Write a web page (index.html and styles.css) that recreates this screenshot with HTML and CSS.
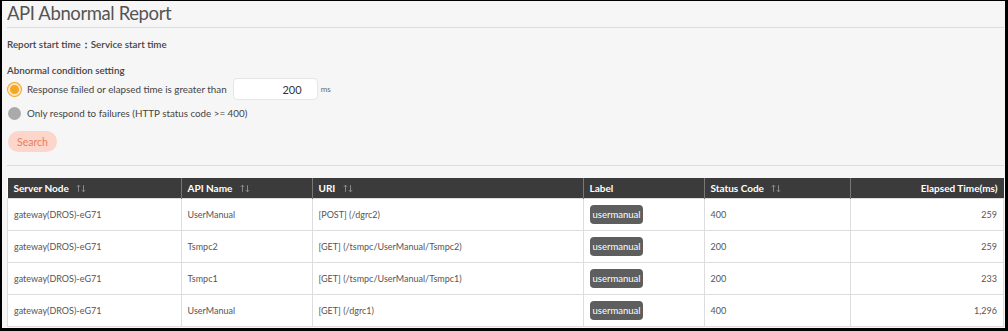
FILE: index.html
```html
<!DOCTYPE html>
<html lang="en">
<head>
  <meta charset="UTF-8" />
  <title>API Abnormal Report</title>
  <link rel="stylesheet" href="styles.css">
</head>
<body>
  <div class="page">
    <h1 class="title">API Abnormal Report</h1>
    <p class="start-time">Report start time：Service start time</p>

    <p class="section-label">Abnormal condition setting</p>
    <div class="option">
      <span class="radio checked"></span>
      <span>Response failed or elapsed time is greater than</span>
      <input class="ms-input" type="text" value="200" />
      <span class="unit">ms</span>
    </div>
    <div class="option">
      <span class="radio"></span>
      <span>Only respond to failures (HTTP status code &gt;= 400)</span>
    </div>
    <button class="search-button">Search</button>
    <div class="divider"></div>

    <table class="report">
      <thead>
        <tr>
          <th class="col-node">Server Node <svg class="sort" viewBox="0 0 12 10"><path d="M3 9V1M1 3l2-2 2 2M9 1v8M7 7l2 2 2-2"/></svg></th>
          <th class="col-api">API Name <svg class="sort" viewBox="0 0 12 10"><path d="M3 9V1M1 3l2-2 2 2M9 1v8M7 7l2 2 2-2"/></svg></th>
          <th class="col-uri">URI <svg class="sort" viewBox="0 0 12 10"><path d="M3 9V1M1 3l2-2 2 2M9 1v8M7 7l2 2 2-2"/></svg></th>
          <th class="col-label">Label</th>
          <th class="col-status">Status Code <svg class="sort" viewBox="0 0 12 10"><path d="M3 9V1M1 3l2-2 2 2M9 1v8M7 7l2 2 2-2"/></svg></th>
          <th class="col-time">Elapsed Time(ms)</th>
        </tr>
      </thead>
      <tbody>
        <tr>
          <td>gateway(DROS)-eG71</td>
          <td>UserManual</td>
          <td>[POST] (/dgrc2)</td>
          <td><span class="badge">usermanual</span></td>
          <td>400</td>
          <td class="num">259</td>
        </tr>
        <tr>
          <td>gateway(DROS)-eG71</td>
          <td>Tsmpc2</td>
          <td>[GET] (/tsmpc/UserManual/Tsmpc2)</td>
          <td><span class="badge">usermanual</span></td>
          <td>200</td>
          <td class="num">259</td>
        </tr>
        <tr>
          <td>gateway(DROS)-eG71</td>
          <td>Tsmpc1</td>
          <td>[GET] (/tsmpc/UserManual/Tsmpc1)</td>
          <td><span class="badge">usermanual</span></td>
          <td>200</td>
          <td class="num">233</td>
        </tr>
        <tr>
          <td>gateway(DROS)-eG71</td>
          <td>UserManual</td>
          <td>[GET] (/dgrc1)</td>
          <td><span class="badge">usermanual</span></td>
          <td>400</td>
          <td class="num">1,296</td>
        </tr>
      </tbody>
    </table>
  </div>
</body>
</html>
```

FILE: styles.css
```css
html, body {
  margin: 0;
  height: 100%;
  overflow: hidden;
}
body {
  font-family: 'Lato', 'Noto Sans', sans-serif;
  font-size: 9.8px;
  color: #444;
  background: #000;
}
.page {
  box-sizing: border-box;
  height: 331px;
  width: 1008px;
  border-style: solid;
  border-color: #000;
  border-width: 1px 3px 3px 2px;
  background: #f6f6f6;
  padding: 0 1px 0 5px;
  overflow: hidden;
}
.title {
  font-size: 18.5px;
  font-weight: 400;
  letter-spacing: -0.4px;
  color: #555;
  margin: 0;
  padding: 2px 0 4px;
  line-height: 20px;
  border-bottom: 1px solid #ddd;
}
.start-time {
  margin: 9px 0 0;
  font-weight: 600;
  line-height: 14px;
}
.section-label {
  margin: 12px 0 0;
  font-weight: 600;
  line-height: 14px;
}
.option {
  display: flex;
  align-items: center;
  gap: 6px;
  height: 24px;
  margin-left: 1px;
}
.radio {
  box-sizing: border-box;
  width: 13px;
  height: 13px;
  border-radius: 50%;
  background: #aaa;
}
.radio.checked {
  background: #f5a623;
  border: 2px solid #fde5bd;
  box-shadow: 0 0 0 1px #f5a623;
}
.ms-input {
  box-sizing: border-box;
  width: 85px;
  height: 22px;
  border: 1px solid #e6e6e6;
  border-radius: 4px;
  background: #fff;
  text-align: right;
  padding: 0 15px 0 4px;
  font-family: inherit;
  font-size: 11px;
  color: #333;
}
.unit {
  font-size: 8px;
  color: #666;
  margin-left: -3px;
}
.search-button {
  display: block;
  margin: 6px 0 0 1px;
  height: 21px;
  padding: 0 9px;
  border: none;
  border-radius: 11px;
  background: #fcd6ca;
  color: #e97e62;
  font-family: inherit;
  font-size: 10.5px;
}
.divider {
  border-top: 1px solid #ddd;
  margin: 13px 0 12px;
}
.report {
  width: 100%;
  border-collapse: collapse;
  background: #fff;
}
.report th {
  background: #3b3b3b;
  color: #fff;
  font-weight: 700;
  font-size: 10px;
  text-align: left;
  height: 20px;
  padding: 0 6px;
  border-left: 1px solid #777;
}
.report th:first-child {
  border-left: none;
}
.report th.col-time {
  text-align: right;
}
.sort {
  width: 10px;
  height: 9px;
  margin-left: 5px;
  vertical-align: -1px;
  fill: none;
  stroke: #999;
  stroke-width: 1;
}
.report td {
  height: 31px;
  padding: 0 6px;
  border: 1px solid #ddd;
  color: #555;
  font-size: 9px;
}
.report td.num {
  text-align: right;
}
.col-node { width: 161px; }
.col-api { width: 118px; }
.col-uri { width: 258px; }
.col-label { width: 108px; }
.col-status { width: 133px; }
.badge {
  display: inline-block;
  background: #5e5e5e;
  color: #fff;
  border-radius: 4px;
  padding: 3px 3px;
  font-size: 9.5px;
  line-height: 13px;
}
```
